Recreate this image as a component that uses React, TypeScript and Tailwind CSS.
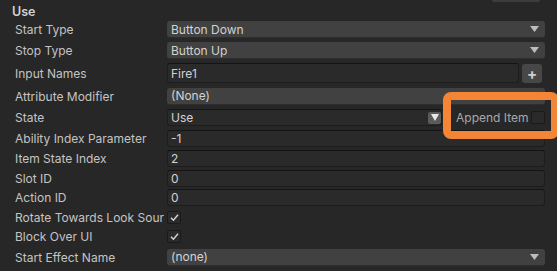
import React from "react";

const Arrow = () => (
  <svg width="9" height="6" viewBox="0 0 9 6" className="shrink-0">
    <path d="M0 0 H9 L4.5 6 Z" fill="#bdbdbd" />
  </svg>
);

const Check = () => (
  <svg width="11" height="11" viewBox="0 0 11 11">
    <path d="M2 5.8 L4.4 8.2 L9 2.8" fill="none" stroke="#d6d6d6" strokeWidth="1.4" />
  </svg>
);

const Dropdown = ({ value }: { value: string }) => (
  <div className="flex-1 h-[17px] bg-[#414141] rounded-[3px] flex items-center justify-between pl-[4px] pr-[6px] text-[#d2d2d2] border-b border-[#2e2e2e]">
    <span>{value}</span>
    <Arrow />
  </div>
);

const TextField = ({ value, h = "h-[17px]" }: { value: string; h?: string }) => (
  <div className={`flex-1 ${h} bg-[#2a2a2a] rounded-[3px] border border-[#1d1d1d] border-t-[#141414] flex items-center pl-[3px] text-[#d2d2d2]`}>
    {value}
  </div>
);

const Checkbox = ({ checked }: { checked?: boolean }) => (
  <div className="w-[14px] h-[13px] bg-[#2a2a2a] border border-[#1a1a1a] rounded-[2px] flex items-center justify-center">
    {checked && <Check />}
  </div>
);

const Row = ({ label, h, children }: { label: string; h: string; children: React.ReactNode }) => (
  <div className={`flex items-center ${h}`}>
    <div className="w-[149px] mr-[3px] overflow-hidden whitespace-nowrap text-[#c4c4c4]">{label}</div>
    <div className="flex-1 flex items-center">{children}</div>
  </div>
);

export default function App() {
  return (
    <div
      className="relative w-[557px] h-[271px] bg-[#272727] overflow-hidden text-[12px] leading-[15px]"
      style={{ fontFamily: "Inter, 'Noto Sans', sans-serif" }}
    >
      <div className="absolute left-[492px] top-0 w-[48px] h-[2px] bg-[#3c3c3c] rounded-b-[2px]" />
      <div className="pl-[15px] pr-[12px]">
        <div className="h-[19px] flex items-center -ml-[3px] pt-[3px] font-semibold text-[#d2d2d2] text-[12.5px]">Use</div>
        <Row label="Start Type" h="h-[21px]">
          <Dropdown value="Button Down" />
        </Row>
        <Row label="Stop Type" h="h-[21px]">
          <Dropdown value="Button Up" />
        </Row>
        <Row label="Input Names" h="h-[24px]">
          <TextField value="Fire1" h="h-[20px]" />
          <div className="ml-[3px] mr-[3px] w-[20px] h-[19px] bg-[#474747] rounded-[3px] flex items-center justify-center text-[#cfcfcf] text-[15px] font-bold">
            +
          </div>
        </Row>
        <Row label="Attribute Modifier" h="h-[22px]">
          <Dropdown value="(None)" />
        </Row>
        <Row label="State" h="h-[21px]">
          <div className="w-[275px] h-[17px] bg-[#2a2a2a] rounded-[3px] border border-[#1d1d1d] border-t-[#141414] flex items-center justify-between pl-[3px] text-[#d2d2d2]">
            <span>Use</span>
            <div className="w-[13px] h-[12px] bg-[#5a5a5a] rounded-[2px] flex items-center justify-center">
              <svg width="8" height="7" viewBox="0 0 8 7">
                <path d="M0 0 H8 L4 7 Z" fill="#e8e8e8" />
              </svg>
            </div>
          </div>
          <span className="ml-[14px] text-[#a9a9a9] whitespace-nowrap">Append Item</span>
          <div className="ml-auto">
            <Checkbox />
          </div>
        </Row>
        <Row label="Ability Index Parameter" h="h-[20px]">
          <TextField value="-1" />
        </Row>
        <Row label="Item State Index" h="h-[20px]">
          <TextField value="2" />
        </Row>
        <Row label="Slot ID" h="h-[20px]">
          <TextField value="0" />
        </Row>
        <Row label="Action ID" h="h-[19px]">
          <TextField value="0" />
        </Row>
        <Row label="Rotate Towards Look Source" h="h-[20px]">
          <Checkbox checked />
        </Row>
        <Row label="Block Over UI" h="h-[19px]">
          <Checkbox checked />
        </Row>
        <Row label="Start Effect Name" h="h-[22px]">
          <Dropdown value="(none)" />
        </Row>
      </div>
      <div className="absolute left-[443px] top-[92px] w-[116px] h-[47px] border-[8px] border-[#f58536] rounded-[8px]" />
    </div>
  );
}
